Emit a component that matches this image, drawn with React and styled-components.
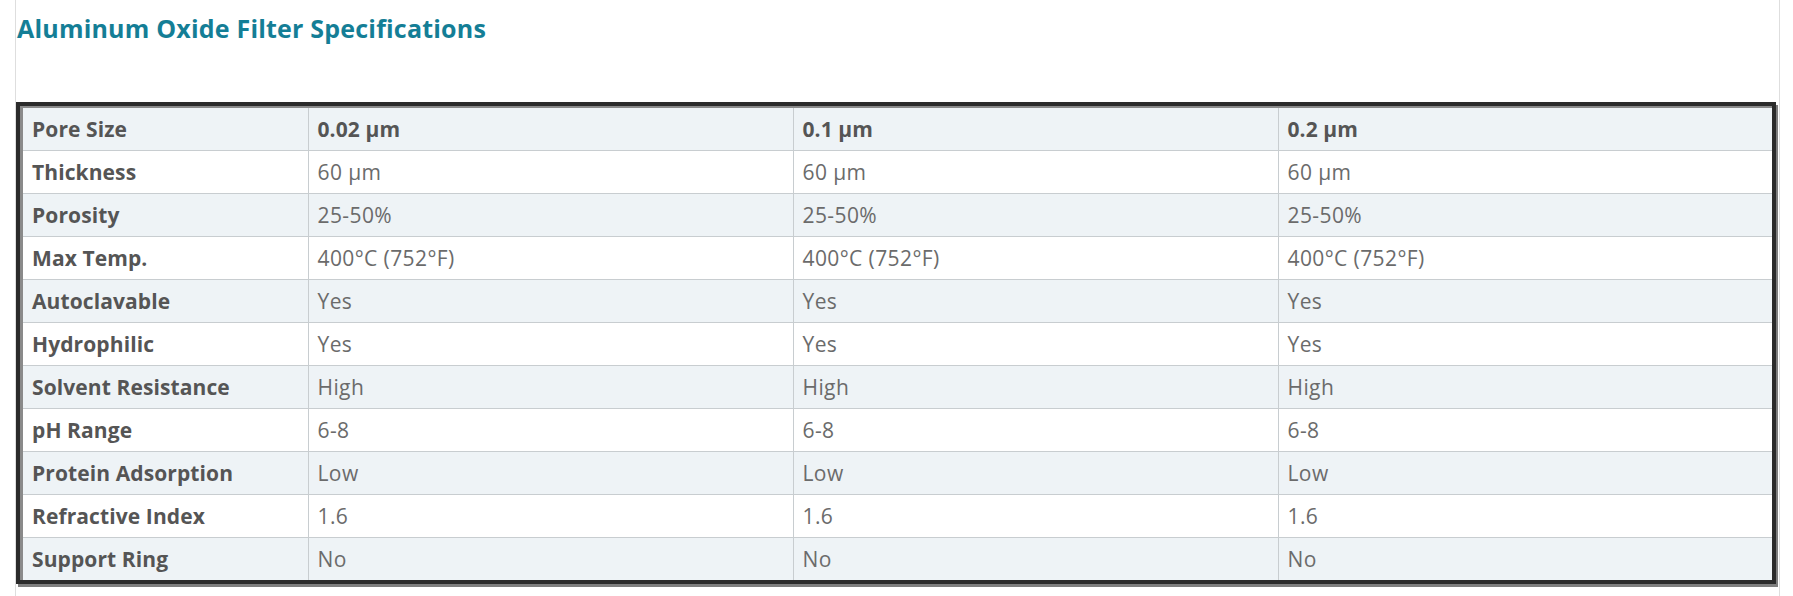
import React from "react";
import styled, { createGlobalStyle } from "styled-components";

const Global = createGlobalStyle`
  html, body { margin: 0; padding: 0; background: #ffffff; }
  body { font-family: "Open Sans", Lato, Arial, sans-serif; }
`;

const Page = styled.div`
  margin-left: 15px;
  width: 1765px;
  min-height: 596px;
  box-sizing: border-box;
  border-left: 1px solid #dedede;
  border-right: 1px solid #dedede;
`;

const Title = styled.h2`
  margin: 0;
  padding: 13px 0 0 1px;
  height: 102px;
  box-sizing: border-box;
  font-family: "Open Sans", Lato, sans-serif;
  font-weight: 700;
  font-size: 25px;
  line-height: 30px;
  color: #147e96;
  letter-spacing: 0.2px;
`;

const Frame = styled.div`
  width: 1760px;
  box-sizing: border-box;
  border: 4px solid #2b2b2b;
  padding: 2px 0 0 3px;
  background: #8a8a8a;
  box-shadow: 2px 3px 0 #7e7e7e;
`;

const Table = styled.table`
  width: 100%;
  border-collapse: collapse;
  table-layout: fixed;
  font-family: "Open Sans", Lato, sans-serif;
  font-size: 21px;
`;

const Col = styled.col`
  width: ${(p) => p.$w};
`;

const Row = styled.tr`
  background: ${(p) => (p.$shaded ? "#eef3f6" : "#ffffff")};
`;

const Cell = styled.td`
  height: 42px;
  padding: 0 9px;
  vertical-align: middle;
  border-left: 1px solid #c8cdd0;
  border-bottom: ${(p) => (p.$last ? "none" : "1px solid #c8cdd0")};
  color: ${(p) => (p.$bold ? "#555555" : "#6b6b6b")};
  font-weight: ${(p) => (p.$bold ? 700 : 400)};
  letter-spacing: ${(p) => (p.$bold ? "0.1px" : "0.4px")};
  white-space: nowrap;
  &:first-child {
    border-left: none;
  }
`;

const rows = [
  ["Pore Size", "0.02 µm", "0.1 µm", "0.2 µm"],
  ["Thickness", "60 µm", "60 µm", "60 µm"],
  ["Porosity", "25-50%", "25-50%", "25-50%"],
  ["Max Temp.", "400°C (752°F)", "400°C (752°F)", "400°C (752°F)"],
  ["Autoclavable", "Yes", "Yes", "Yes"],
  ["Hydrophilic", "Yes", "Yes", "Yes"],
  ["Solvent Resistance", "High", "High", "High"],
  ["pH Range", "6-8", "6-8", "6-8"],
  ["Protein Adsorption", "Low", "Low", "Low"],
  ["Refractive Index", "1.6", "1.6", "1.6"],
  ["Support Ring", "No", "No", "No"],
];

export default function App() {
  return (
    <>
      <Global />
      <Page>
        <Title>Aluminum Oxide Filter Specifications</Title>
        <Frame>
          <Table>
            <colgroup>
              <Col $w="285px" />
              <Col $w="485px" />
              <Col $w="485px" />
              <Col $w="auto" />
            </colgroup>
            <tbody>
              {rows.map((r, i) => (
                <Row key={r[0]} $shaded={i % 2 === 0}>
                  {r.map((c, j) => (
                    <Cell
                      key={j}
                      $bold={j === 0 || i === 0}
                      $last={i === rows.length - 1}
                    >
                      {c}
                    </Cell>
                  ))}
                </Row>
              ))}
            </tbody>
          </Table>
        </Frame>
      </Page>
    </>
  );
}
